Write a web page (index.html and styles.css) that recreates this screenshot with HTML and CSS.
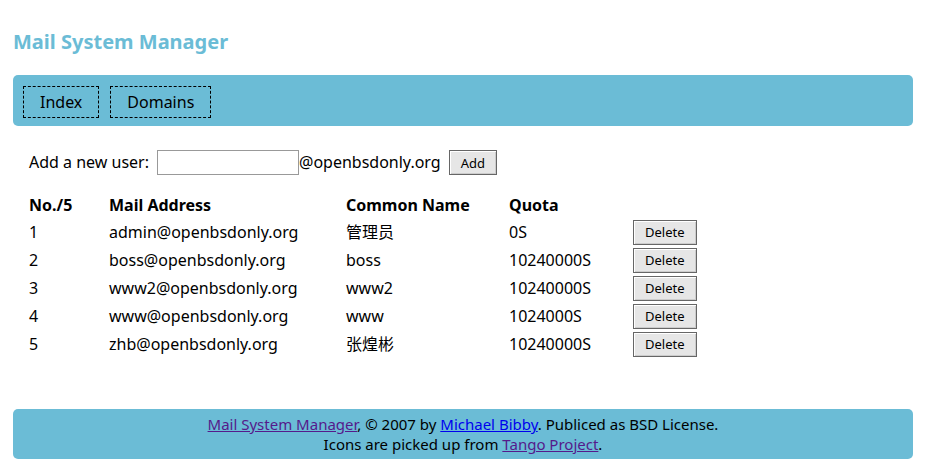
FILE: index.html
```html
<!DOCTYPE html>
<html lang="en">
<head>
<meta charset="utf-8">
<title>Mail System Manager</title>
<link rel="stylesheet" href="styles.css">
</head>
<body>
<h1>Mail System Manager</h1>
<nav>
<a href="#index">Index</a>
<a href="#domains">Domains</a>
</nav>
<main>
<form class="add-user">
<label for="user">Add a new user:</label>
<input id="user" type="text">
<span>@openbsdonly.org</span>
<button type="button">Add</button>
</form>
<table>
<colgroup><col class="no"><col class="mail"><col class="name"><col class="quota"><col class="action"></colgroup>
<thead>
<tr><th>No./5</th><th>Mail Address</th><th>Common Name</th><th>Quota</th><td></td></tr>
</thead>
<tbody>
<tr><td>1</td><td>admin@openbsdonly.org</td><td lang="zh">管理员</td><td>0S</td><td><button type="button">Delete</button></td></tr>
<tr><td>2</td><td>boss@openbsdonly.org</td><td>boss</td><td>10240000S</td><td><button type="button">Delete</button></td></tr>
<tr><td>3</td><td>www2@openbsdonly.org</td><td>www2</td><td>10240000S</td><td><button type="button">Delete</button></td></tr>
<tr><td>4</td><td>www@openbsdonly.org</td><td>www</td><td>1024000S</td><td><button type="button">Delete</button></td></tr>
<tr><td>5</td><td>zhb@openbsdonly.org</td><td lang="zh">张煌彬</td><td>10240000S</td><td><button type="button">Delete</button></td></tr>
</tbody>
</table>
</main>
<footer>
<p><a class="visited" href="#home">Mail System Manager</a>, © 2007 by <a href="#author">Michael Bibby</a>. Publiced as BSD License.</p>
<p>Icons are picked up from <a class="visited" href="#tango">Tango Project</a>.</p>
</footer>
</body>
</html>
```
FILE: styles.css
```css
* { box-sizing: border-box; }
body {
  margin: 0;
  padding: 28px 12px 0 13px;
  background: #fff;
  color: #000;
  font: 16px/24px "Noto Sans", "Noto Sans CJK SC", sans-serif;
}
h1 {
  margin: 0 0 19px;
  color: #6bbcd6;
  font-size: 20px;
  line-height: 28px;
}
nav {
  display: flex;
  gap: 11px;
  padding: 11px 10px 8px;
  border-radius: 5px;
  background: #6bbcd6;
}
nav a {
  padding: 3px 16px;
  border: 1px dashed #000;
  color: #000;
  text-decoration: none;
}
main { padding: 24px 16px 0; }
.add-user {
  display: flex;
  align-items: center;
  margin-bottom: 17px;
}
.add-user label,
.add-user span {
  margin-right: 8px;
  line-height: 22px;
  padding-bottom: 2px;
}
input {
  width: 142px;
  height: 25px;
  padding: 2px;
  border: 1px solid #999;
  font: inherit;
}
button {
  display: block;
  height: 25px;
  padding: 0 11px;
  border: 1px solid #666;
  background: #e6e6e6;
  box-shadow: inset 1px 1px #fff, inset -1px -1px #ccc;
  color: #000;
  font: 13px/22px "Noto Sans", sans-serif;
}
table {
  table-layout: fixed;
  width: 668px;
  border-collapse: collapse;
}
th, td {
  height: 28px;
  padding: 0;
  text-align: left;
  white-space: nowrap;
}
thead th, thead td { height: 26px; }
th { font-weight: 700; }
.no { width: 80px; }
.mail { width: 237px; }
.name { width: 163px; }
.quota { width: 124px; }
.action { width: 64px; }
footer {
  margin-top: 51px;
  padding: 5px 10px;
  border-radius: 5px;
  background: #6bbcd6;
  font-size: 15px;
  line-height: 20px;
  text-align: center;
}
footer p { margin: 0; }
footer a { color: #00e; }
footer .visited { color: #551a8b; }
```
